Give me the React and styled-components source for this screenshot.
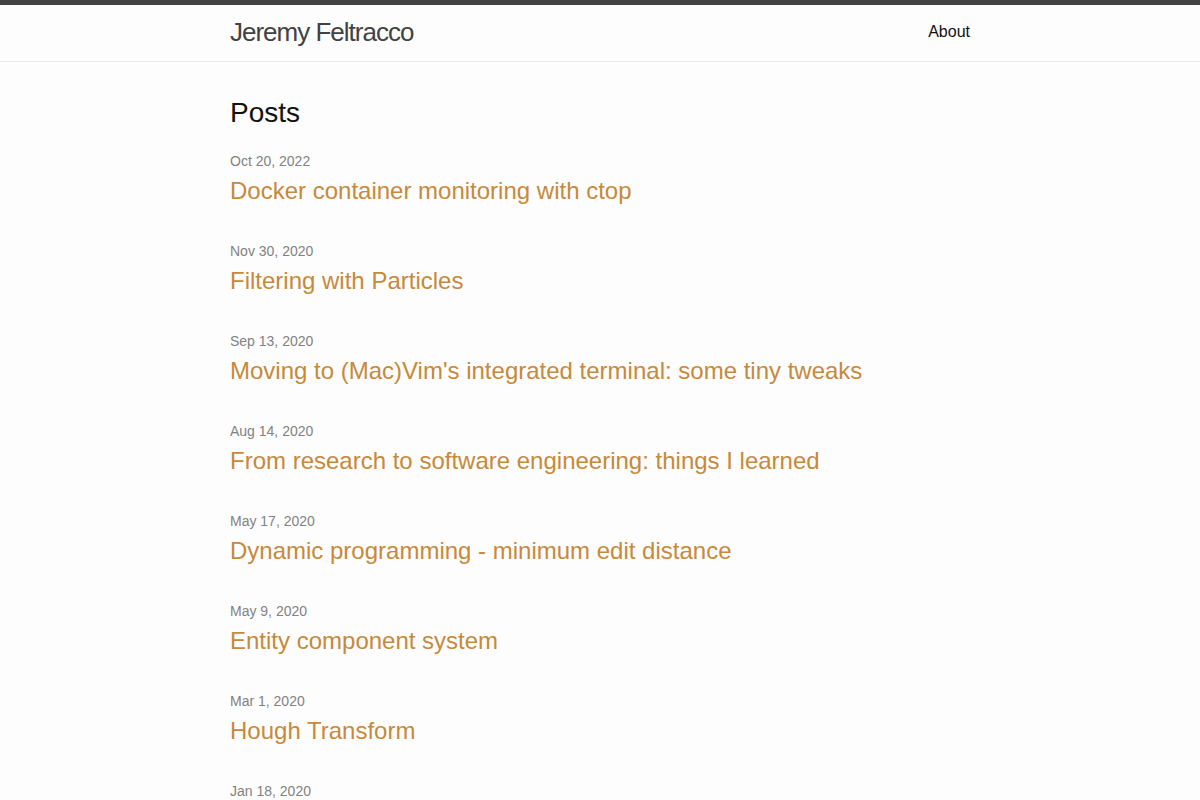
import React from "react";
import styled, { createGlobalStyle } from "styled-components";

const GlobalStyle = createGlobalStyle`
    body {
        margin: 0;
        padding: 0;
        background-color: #fdfdfd;
        color: #111;
        font: 400 16px/1.5 "Liberation Sans", Arial, Helvetica, sans-serif;
    }
`;

const Header = styled.header`
    border-top: 5px solid #424242;
    border-bottom: 1px solid #e8e8e8;
    min-height: 55.95px;
`;

const Wrapper = styled.div`
    max-width: 740px;
    margin: 0 auto;
    padding: 0 30px;
`;

const HeaderInner = styled(Wrapper)`
    display: flex;
    justify-content: space-between;
    align-items: flex-start;
`;

const SiteTitle = styled.a`
    font-size: 26px;
    font-weight: 300;
    line-height: 54px;
    letter-spacing: -1px;
    color: #424242;
    text-decoration: none;
`;

const Nav = styled.nav`
    line-height: 54px;
`;

const PageLink = styled.a`
    color: #111;
    line-height: 1.5;
    text-decoration: none;
`;

const Main = styled.main`
    padding: 30px 0;
`;

const Heading = styled.h2`
    font-size: 28px;
    font-weight: 400;
    line-height: 1.5;
    margin: 0 0 15px;
`;

const PostList = styled.ul`
    list-style: none;
    margin: 0;
    padding: 0;
`;

const PostItem = styled.li`
    margin-bottom: 30px;
`;

const Meta = styled.span`
    font-size: 14px;
    color: #828282;
`;

const PostTitle = styled.h3`
    font-size: 24px;
    font-weight: 400;
    line-height: 1.5;
    margin: 0;
`;

const PostLink = styled.a`
    color: #c7893a;
    text-decoration: none;
`;

const posts = [
    { date: "Oct 20, 2022", title: "Docker container monitoring with ctop" },
    { date: "Nov 30, 2020", title: "Filtering with Particles" },
    { date: "Sep 13, 2020", title: "Moving to (Mac)Vim's integrated terminal: some tiny tweaks" },
    { date: "Aug 14, 2020", title: "From research to software engineering: things I learned" },
    { date: "May 17, 2020", title: "Dynamic programming - minimum edit distance" },
    { date: "May 9, 2020", title: "Entity component system" },
    { date: "Mar 1, 2020", title: "Hough Transform" },
    { date: "Jan 18, 2020", title: "Kalman Filter" },
];

export default function App() {
    return (
        <>
            <GlobalStyle />
            <Header>
                <HeaderInner>
                    <SiteTitle href="#">Jeremy Feltracco</SiteTitle>
                    <Nav>
                        <PageLink href="#">About</PageLink>
                    </Nav>
                </HeaderInner>
            </Header>

            <Main>
                <Wrapper>
                    <Heading>Posts</Heading>
                    <PostList>
                        {posts.map((post) => (
                            <PostItem key={post.title}>
                                <Meta>{post.date}</Meta>
                                <PostTitle>
                                    <PostLink href="#">{post.title}</PostLink>
                                </PostTitle>
                            </PostItem>
                        ))}
                    </PostList>
                </Wrapper>
            </Main>
        </>
    );
}
